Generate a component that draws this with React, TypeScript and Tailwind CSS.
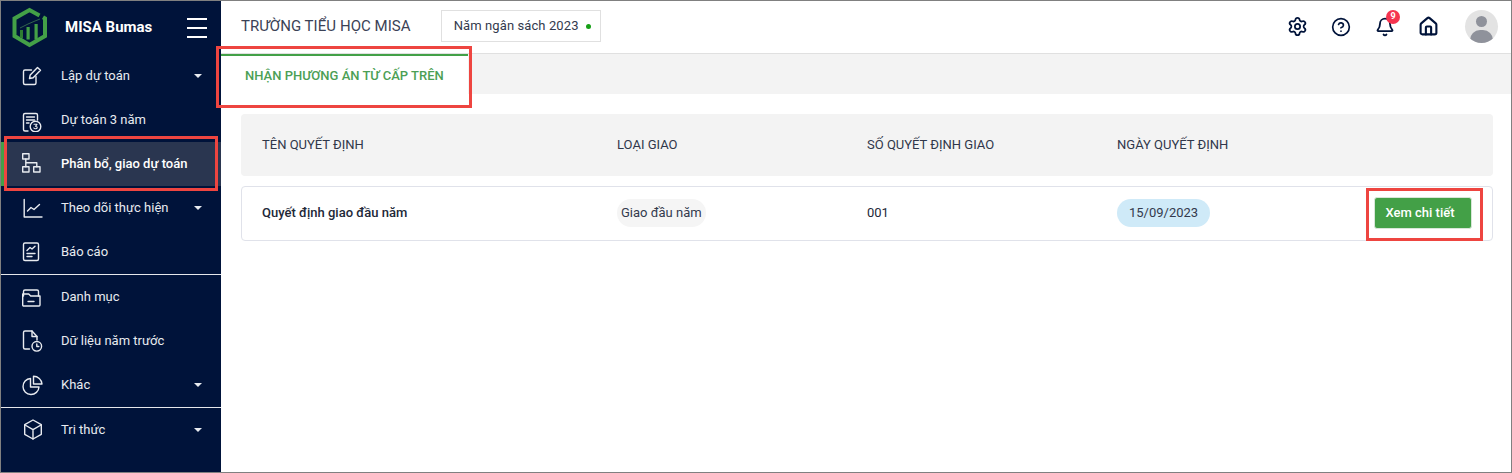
import { Settings, CircleHelp, Bell, House } from "lucide-react";

type NavItem = { label: string; icon: React.ReactNode; caret?: boolean; active?: boolean };

const stroke = { fill: "none", stroke: "#e8ebf0", strokeWidth: 1.4, strokeLinecap: "round", strokeLinejoin: "round" } as const;

function Icon({ children }: { children: React.ReactNode }) {
  return (
    <svg width="24" height="24" viewBox="0 0 24 24" {...stroke}>
      {children}
    </svg>
  );
}

const icons = {
  edit: (
    <Icon>
      <path d="M11.5 6H5a1.5 1.5 0 0 0-1.5 1.5v11.5A1.5 1.5 0 0 0 5 20.5h9.5A1.5 1.5 0 0 0 16 19v-6.5" />
      <path d="M9.5 14.5l.7-3.5L17.5 3.5l3 2.8-7.3 7.5-3.7.7z" />
    </Icon>
  ),
  three: (
    <Icon>
      <path d="M8 23H5a1.5 1.5 0 0 1-1.5-1.5V7A1.5 1.5 0 0 1 5 5.5h11A1.5 1.5 0 0 1 17.5 7v5" />
      <path d="M6.5 9h8M6.5 12h8M6.5 15h2.5" />
      <circle cx="15.5" cy="18.5" r="5.3" />
      <path d="M14 16.3h3l-1.6 2c1.2 0 1.8.6 1.8 1.2s-.7 1.3-1.7 1.3-1.5-.3-1.7-.9" strokeWidth="1.1" />
    </Icon>
  ),
  tree: (
    <Icon>
      <rect x="2.7" y="1.7" width="6.3" height="5.3" />
      <rect x="2.7" y="14.7" width="6.3" height="5.3" />
      <rect x="13.7" y="14.7" width="6.3" height="5.3" />
      <path d="M5.8 7v7.7M5.8 10.8h11v3.9" />
    </Icon>
  ),
  chart: (
    <Icon>
      <path d="M4.2 3.5v17.5H22" />
      <path d="M7.5 15l3.5-3.5 3 2 5.5-5" />
    </Icon>
  ),
  report: (
    <Icon>
      <rect x="3.5" y="3" width="15" height="17.5" rx="1.5" />
      <path d="M7 10.5l3-3 2 1.5 3-2.8M7 13.5h8M7 16.5h5" />
    </Icon>
  ),
  folder: (
    <Icon>
      <path d="M3.5 11V6.5A1.5 1.5 0 0 1 5 5h12a1.5 1.5 0 0 1 1.5 1.5V11" />
      <path d="M2.7 9h6l2 2h9.3v9a1 1 0 0 1-1 1H3.7a1 1 0 0 1-1-1z" />
      <path d="M8 16.5h6" />
    </Icon>
  ),
  history: (
    <Icon>
      <path d="M9.5 20H5A1.5 1.5 0 0 1 3.5 18.5V3.5A1.5 1.5 0 0 1 5 2h7l5 5.5v3.5" />
      <path d="M12 2v5.5h5" />
      <circle cx="16.8" cy="17.3" r="4.8" />
      <path d="M16.8 15v2.5h2" />
    </Icon>
  ),
  pie: (
    <Icon>
      <path d="M10.5 5.5a8 8 0 1 0 8.5 8.5h-8.5z" />
      <path d="M13.5 3.2v7.8H22A8.5 8.5 0 0 0 13.5 3.2z" />
    </Icon>
  ),
  box: (
    <Icon>
      <path d="M13 2l8.3 4.7v9.6L13 21l-8.3-4.7V6.7z" />
      <path d="M5 7l8 4.7L21 7M13 11.7V21" />
    </Icon>
  ),
};

const groups: NavItem[][] = [
  [
    { label: "Lập dự toán", icon: icons.edit, caret: true },
    { label: "Dự toán 3 năm", icon: icons.three },
    { label: "Phân bổ, giao dự toán", icon: icons.tree, active: true },
    { label: "Theo dõi thực hiện", icon: icons.chart, caret: true },
    { label: "Báo cáo", icon: icons.report },
  ],
  [
    { label: "Danh mục", icon: icons.folder },
    { label: "Dữ liệu năm trước", icon: icons.history },
    { label: "Khác", icon: icons.pie, caret: true },
  ],
  [{ label: "Tri thức", icon: icons.box, caret: true }],
];

function Logo() {
  return (
    <svg width="36" height="41" viewBox="0 0 36 41">
      <path d="M27.5 8.5L17.5 3 2.5 11.5V29l15 9 15.5-9V11.5l-2-1.2" fill="none" stroke="#43a047" strokeWidth="4" />
      <rect x="8" y="23" width="3" height="8" fill="#2e7d32" />
      <rect x="14.5" y="20" width="3.2" height="12.5" fill="#43a047" />
      <rect x="22.5" y="17" width="3.2" height="15.5" fill="#43a047" />
      <path d="M8 21l8-4 7-3 5-2" fill="none" stroke="#3d7a52" strokeWidth="0.8" />
    </svg>
  );
}

function Sidebar() {
  return (
    <aside className="w-[220px] shrink-0 bg-[#00133a] text-[#e8ebf0] flex flex-col">
      <div className="h-[53px] flex items-center pl-[11px] pr-[14px]">
        <Logo />
        <span className="ml-[17px] text-[15px] font-bold text-white">MISA Bumas</span>
        <div className="ml-auto flex flex-col gap-[7px]">
          <div className="w-5 h-[2px] bg-white" />
          <div className="w-5 h-[2px] bg-white" />
          <div className="w-5 h-[2px] bg-white" />
        </div>
      </div>
      {groups.map((group, i) => (
        <div key={i} className={i > 0 ? "border-t border-[#e5e7eb]" : ""}>
          {group.map((item) => (
            <div
              key={item.label}
              className={`h-[44px] flex items-center pr-[19px] text-[13px] ${
                item.active
                  ? "bg-[#2a3650] font-medium text-white border-l-[3px] border-[#43a047] pl-[16px]"
                  : "pl-[19px]"
              }`}
            >
              <span className="w-[41px] shrink-0 flex items-center">{item.icon}</span>
              <span>{item.label}</span>
              {item.caret && (
                <span className="ml-auto w-0 h-0 border-x-[4px] border-x-transparent border-t-[4px] border-t-[#e8ebf0]" />
              )}
            </div>
          ))}
        </div>
      ))}
    </aside>
  );
}

function Header() {
  return (
    <header className="h-[53px] shrink-0 flex items-center pl-[20px] pr-[13px] pb-[2px] border-b border-[#e0e0e0]">
      <span className="text-[15px] text-[#3b4256] tracking-[0.05px]">TRƯỜNG TIỂU HỌC MISA</span>
      <div className="ml-[30px] h-[32px] w-[160px] border border-[#e0e0e0] flex items-center pl-[12px] text-[13px] text-[#333a4d] tracking-[0.1px]">
        Năm ngân sách 2023
        <span className="ml-[7px] w-[5px] h-[5px] rounded-full bg-[#16a016]" />
      </div>
      <div className="ml-auto flex items-center">
        <div className="flex items-center mt-[1px]">
          <Settings size={21} strokeWidth={2} className="text-[#00133a]" />
          <CircleHelp size={20} strokeWidth={2} className="ml-[23px] text-[#00133a]" />
          <div className="relative ml-[24px]">
            <Bell size={20} strokeWidth={2.2} className="text-[#00133a]" />
            <span className="absolute -top-[7px] left-[11px] w-[14px] h-[14px] rounded-full bg-[#f5344f] text-white text-[9px] font-bold flex items-center justify-center">
              9
            </span>
          </div>
          <House size={21} strokeWidth={2.4} className="ml-[23px] text-[#00133a]" />
        </div>
        <div className="relative ml-[26px] w-[33px] h-[33px] rounded-full bg-[#e3e3e3] overflow-hidden">
          <div className="absolute left-[11px] top-[6px] w-[11px] h-[11px] rounded-full bg-[#8f929b]" />
          <div className="absolute left-[5px] top-[20px] w-[23px] h-[20px] rounded-full bg-[#8f929b]" />
        </div>
      </div>
    </header>
  );
}

const colClass = "w-[250px] shrink-0";

function Main() {
  return (
    <main className="flex-1 min-w-0 flex flex-col">
      <Header />
      <div className="h-[40px] shrink-0 bg-[#f3f3f3] flex">
        <div className="w-[247px] bg-white border-t-2 border-[#43a047] pl-[24px] pt-[12px] text-[13px] font-medium text-[#4c9f55] leading-[16px]">
          NHẬN PHƯƠNG ÁN TỪ CẤP TRÊN
        </div>
      </div>
      <div className="pt-[20px] pl-[20px] pr-[18px]">
        <div className="h-[62px] bg-[#f3f3f3] rounded-[4px] flex items-center pl-[21px] text-[13px] text-[#30374a]">
          <div className="w-[355px] shrink-0">TÊN QUYẾT ĐỊNH</div>
          <div className={colClass}>LOẠI GIAO</div>
          <div className={colClass}>SỐ QUYẾT ĐỊNH GIAO</div>
          <div className={colClass}>NGÀY QUYẾT ĐỊNH</div>
        </div>
        <div className="mt-[10px] h-[55px] border border-[#e0e2ea] rounded-[4px] flex items-center pl-[20px] pr-[20px] pb-[1px] text-[13px] text-[#222838]">
          <div className="w-[355px] shrink-0 font-medium">Quyết định giao đầu năm</div>
          <div className={colClass}>
            <span className="inline-block h-[28px] leading-[28px] px-[4px] rounded-full bg-[#f5f5f5] text-[#333a4d]">
              Giao đầu năm
            </span>
          </div>
          <div className={colClass}>001</div>
          <div className={colClass}>
            <span className="inline-block h-[28px] leading-[28px] px-[12px] rounded-full bg-[#cfeaf8] text-[#333a4d]">
              15/09/2023
            </span>
          </div>
          <button className="ml-auto h-[32px] w-[98px] rounded-[3px] bg-[#43a047] border border-[#d8e6d8] pr-[6px] text-white text-[13px] font-medium">
            Xem chi tiết
          </button>
        </div>
      </div>
    </main>
  );
}

export default function App() {
  return (
    <div className="relative w-[1512px] h-[473px] overflow-hidden border border-[#808080] bg-white flex font-['Roboto',sans-serif]">
      <Sidebar />
      <Main />
      {/* red annotation boxes */}
      <div className="absolute left-[3px] top-[135px] w-[214px] h-[55px] border-[3px] border-[#ee4540] pointer-events-none" />
      <div className="absolute left-[215px] top-[45px] w-[256px] h-[62px] border-[3px] border-[#ee4540] pointer-events-none" />
      <div className="absolute left-[1365px] top-[187px] w-[117px] h-[53px] border-[3px] border-[#ee4540] pointer-events-none" />
    </div>
  );
}
